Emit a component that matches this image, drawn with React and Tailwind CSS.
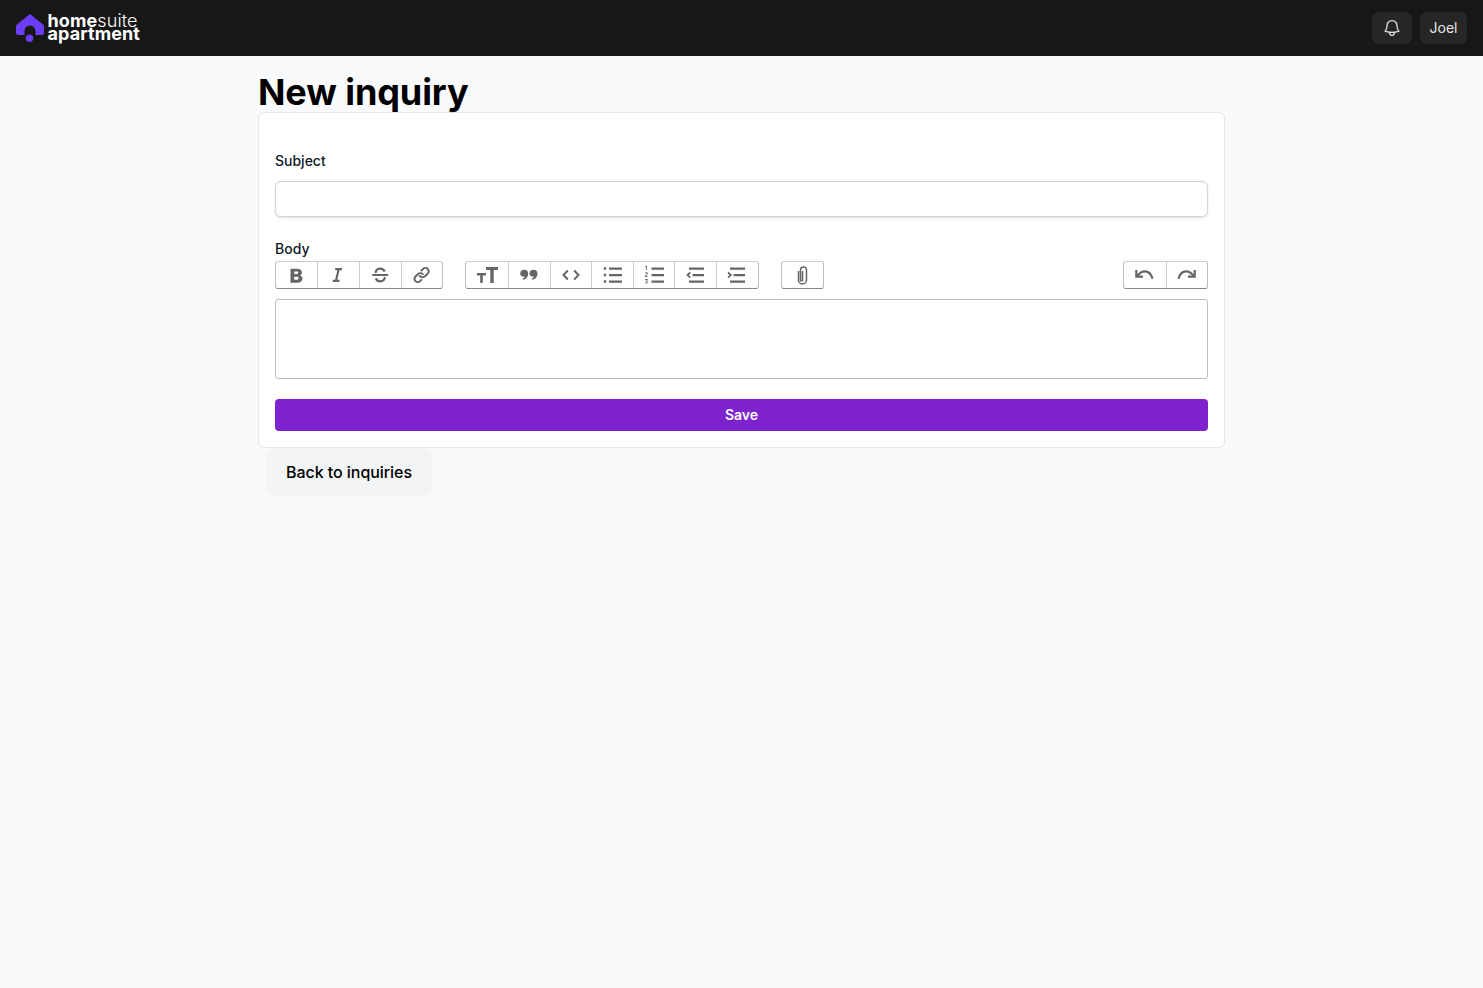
import React from "react";
import { HiOutlineBell } from "react-icons/hi2";

const P = ({ d }) => <path d={d} fill="currentColor" fillRule="evenodd" />;
const L = ({ d, w = 2 }) => <path d={d} fill="none" stroke="currentColor" strokeWidth={w} />;

const icons = {
  bold: <P d="M5.500 5.700h6.700c2.900 0 4.800 1.500 4.800 3.700 0 1.400-.8 2.500-2 3 1.600.5 2.500 1.600 2.500 3.100 0 2.500-2 4.200-5 4.200H5.500V5.700Zm3.700 2.800v2.600h2.500c.9 0 1.500-.5 1.500-1.300s-.6-1.300-1.500-1.300H9.200Zm0 5.300v3h2.800c1 0 1.600-.6 1.600-1.500s-.6-1.500-1.600-1.500H9.200Z" />,
  italic: <g transform="translate(-0.8 0)"><P d="M9 5h6.800v2.200h-2.400l-2.300 9.600h2.200V19H6.500v-2.200h2.400l2.300-9.600H9V5Z" /></g>,
  strike: <g transform="translate(-0.8 0)"><P d="M4 11h16v2H4z" /><L d="M7.600 10c-.5-2.600 1.700-4.300 4.400-4.300 2.200 0 3.800 1 4.400 2.900M16.400 14c.5 2.600-1.700 4.300-4.400 4.300-2.200 0-3.800-1-4.400-2.900" w={2.200} /></g>,
  link: <g transform="translate(-0.5 0)"><P d="M18.948 5.258a4.337 4.337 0 0 0-6.108 0L11.217 6.87a.993.993 0 0 0 0 1.41c.392.39 1.027.39 1.418 0l1.623-1.613a2.323 2.323 0 0 1 3.271 0 2.29 2.29 0 0 1 0 3.251l-2.393 2.38a3.021 3.021 0 0 1-4.255 0l-.05-.049a1.007 1.007 0 0 0-1.418 0 .993.993 0 0 0 0 1.41l.05.049a5.036 5.036 0 0 0 7.091 0l2.394-2.38a4.275 4.275 0 0 0 0-6.072Zm-13.683 13.6a4.337 4.337 0 0 0 6.108 0l1.262-1.255a.993.993 0 0 0 0-1.41 1.007 1.007 0 0 0-1.418 0L9.954 17.45a2.323 2.323 0 0 1-3.27 0 2.29 2.29 0 0 1 0-3.251l2.344-2.331a2.579 2.579 0 0 1 3.631 0c.392.39 1.027.39 1.419 0a.993.993 0 0 0 0-1.41 4.593 4.593 0 0 0-6.468 0l-2.345 2.33a4.275 4.275 0 0 0 0 6.072Z" /></g>,
  heading: <P d="M11 4h12v3h-4.300v13h-3.400V7H11V4ZM2 10h9v2.400H7.800V20H5.200v-7.600H2V10Z" />,
  quote: <P d="M3.200 10.700a4 4 0 1 1 8 0c0 3-2.100 5.300-5 6.100l-.7-1c1.100-.5 1.800-1.400 2.100-2.300-2.500.3-4.400-.9-4.400-2.800Zm9.300 0a4 4 0 1 1 8 0c0 3-2.100 5.300-5 6.100l-.7-1c1.100-.5 1.800-1.400 2.100-2.300-2.500.3-4.400-.9-4.400-2.800Z" />,
  code: <L d="M8.800 7.500 4.500 12l4.300 4.500M15.200 7.500l4.300 4.500-4.300 4.500" w={2} />,
  bullets: <P d="M3.800 4.300h2.400v2.400H3.800zM3.800 10.800h2.400v2.400H3.800zM3.800 17.300h2.400v2.400H3.800zM9 4.500h13v2.200H9zM9 11h13v2.200H9zM9 17.500h13v2.200H9z" />,
  numbers: <><P d="M9.500 4.500h12.500v2.200H9.500zM9.500 11h12.500v2.200H9.500zM9.500 17.500h12.500v2.200H9.500z" /><L d="M3 3.800 4.600 3v4.200M3 9.800h2.400v1.400l-2.300 1.700v.6h2.500M3 16.500h2.500l-1.300 1.500c1.200 0 1.600.5 1.600 1 0 1-1.600 1.300-2.800.8" w={0.9} /></>,
  outdent: <g transform="translate(-0.5 0)"><P d="M5.500 4.500H20.500v2.200H5.500zM9 11h11.500v2.200H9zM5.500 17.500H20.500v2.200H5.500z" /><L d="M6.800 9.500 4 12.100l2.800 2.600" w={1.800} /></g>,
  indent: <g transform="translate(-0.5 0)"><P d="M5.500 4.500H20.500v2.200H5.500zM9 11h11.500v2.200H9zM5.500 17.500H20.500v2.200H5.500z" /><L d="M3.500 9.500l2.800 2.600-2.800 2.600" w={1.800} /></g>,
  attach: <g transform="translate(0.5 0)"><L d="M8 8v9a4 4 0 0 0 8 0V7a3 3 0 0 0-6 0v10a1 1 0 0 0 2 0V8" w={1.500} /></g>,
  undo: <><L d="M3.300 7v6.700H10" w={2.200} /><L d="M3.800 13.500C5.800 10.500 8.500 8.300 12 8.300c3.800 0 6.300 3 7.600 7.500" w={2.200} /></>,
  redo: <g transform="translate(-1 0)"><L d="M20.700 7v6.700H14" w={2.200} /><L d="M20.200 13.500C18.200 10.500 15.500 8.300 12 8.300c-3.800 0-6.300 3-7.600 7.500" w={2.200} /></g>,
};

function Group({ names, widths, className = "" }) {
  return (
    <div className={`flex h-7 rounded-[3px] border border-[#bbbbbb] border-t-[#cccccc] border-b-[#888888] bg-white ${className}`}>
      {names.map((n, i) => (
        <button key={n} type="button" aria-label={n} className={`flex h-full items-center justify-center text-[#666666] ${widths ? widths[i] : "w-[41.6px]"} ${i ? "border-l border-[#cccccc]" : ""}`}>
          <svg width="24" height="24" viewBox="0 0 24 24">{icons[n]}</svg>
        </button>
      ))}
    </div>
  );
}

function Logo() {
  return (
    <div className="flex items-center">
      <svg width="28" height="30" viewBox="0 0 28 30" className="mr-[3.500px] mt-[1px]">
        <path d="M14 0 27 10.500Q28 11.300 28 12.500V18.500Q28 21 25.500 21H19.500V17A5.500 5.500 0 0 0 8.500 17V21H2.500Q0 21 0 18.500V12.500Q0 11.300 1 10.500Z" fill="#6b3df5" />
        <circle cx="13.500" cy="24.200" r="3.700" fill="#6b3df5" />
      </svg>
      <div className="flex -translate-y-[1px] flex-col text-white font-['Inter',sans-serif] text-[18px] leading-[13px] tracking-[0.1px]">
        <div className="whitespace-nowrap"><span className="font-bold">home</span><span className="font-light">suite</span></div>
        <div className="whitespace-nowrap font-bold">apartment</div>
      </div>
    </div>
  );
}

export default function App() {
  return (
    <div className="min-h-[988px] bg-[#f9fafb] font-['Inter',sans-serif]">
      <header className="flex h-14 items-center justify-between bg-[#171717] pl-4 pr-4">
        <Logo />
        <div className="flex items-center gap-2">
          <button type="button" aria-label="Notifications" className="flex h-8 w-10 items-center justify-center rounded-md bg-[#262626] text-[#e5e5e5]">
            <HiOutlineBell size={20} />
          </button>
          <button type="button" className="h-8 w-[47px] rounded-md bg-[#262626] text-sm text-[#e5e5e5]">Joel</button>
        </div>
      </header>
      <main className="mx-auto w-[967px]">
        <h1 className="mt-4 text-4xl font-bold leading-10 tracking-[-0.08px] text-black">New inquiry</h1>
        <div className="rounded-md border border-gray-200 bg-white px-4 pb-4 pt-[38px]">
          <label className="block text-sm font-medium text-gray-900">Subject</label>
          <input className="mt-[10px] block h-9 w-full rounded-md border border-gray-300 bg-white shadow-sm" />
          <label className="mt-[22px] block text-sm font-medium text-gray-900">Body</label>
          <div className="mt-[2px] flex">
            <Group names={["bold", "italic", "strike", "link"]} widths={["w-[41px]", "w-[42px]", "w-[42px]", "w-[41.400px]"]} className="mr-[22px]" />
            <Group names={["heading", "quote", "code", "bullets", "numbers", "outdent", "indent"]} className="mr-[22px]" />
            <Group names={["attach"]} />
            <Group names={["undo", "redo"]} widths={["w-[42px]", "w-[41.200px]"]} className="ml-auto" />
          </div>
          <div className="mt-[10px] h-20 rounded-[3px] border border-[#bbbbbb]" />
          <button type="button" className="mt-5 h-8 w-full rounded-sm bg-[#7e22ce] text-sm font-semibold text-white">Save</button>
        </div>
        <button type="button" className="ml-2 block w-[166px] rounded-lg bg-gray-100 py-3 text-base font-medium tracking-[-0.05px] text-black">Back to inquiries</button>
      </main>
    </div>
  );
}
